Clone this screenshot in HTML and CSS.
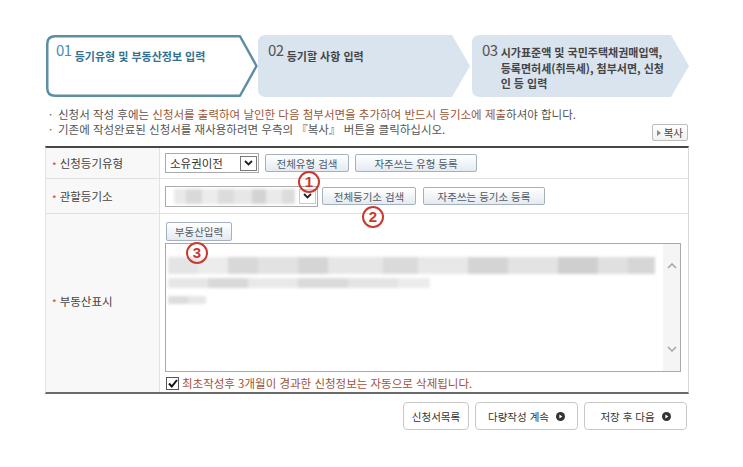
FILE: index.html
```html
<!DOCTYPE html>
<html lang="ko">
<head>
<meta charset="utf-8">
<title>등기신청</title>
<link rel="stylesheet" href="styles.css">
</head>
<body>
<div class="page">
  <div class="steps">
    <div class="step step-current">
      <svg class="step-shape" viewBox="0 0 212 62" preserveAspectRatio="none"><path d="M9 1.25H194L210.5 31L194 60.75H9Q1.25 60.75 1.25 53V9Q1.25 1.25 9 1.25Z" fill="#fff" stroke="#5d8ea2" stroke-width="2.5" stroke-linejoin="round"/></svg>
      <div class="step-text"><span class="step-num">01</span><span class="step-title">등기유형 및 부동산정보 입력</span></div>
    </div>
    <div class="step">
      <svg class="step-shape" viewBox="0 0 212 62" preserveAspectRatio="none"><path d="M8 0H194L212 31L194 62H8Q0 62 0 54V8Q0 0 8 0Z" fill="#dae4ee"/></svg>
      <div class="step-text"><span class="step-num">02</span><span class="step-title">등기할 사항 입력</span></div>
    </div>
    <div class="step step-last">
      <svg class="step-shape" viewBox="0 0 217 62" preserveAspectRatio="none"><path d="M8 0H199L217 31L199 62H8Q0 62 0 54V8Q0 0 8 0Z" fill="#dae4ee"/></svg>
      <div class="step-text"><span class="step-num">03</span><span class="step-title">시가표준액 및 국민주택채권매입액,<br>등록면허세(취득세), 첨부서면, 신청<br>인 등 입력</span></div>
    </div>
  </div>

  <div class="notes">
    <ul class="note-list">
      <li>신청서 작성 후에는 <span class="em">신청서를 출력하여 날인한 다음 첨부서면을 추가하여 반드시 등기소에 제출</span>하셔야 합니다.</li>
      <li>기존에 작성완료된 신청서를 재사용하려면 우측의 『복사』 버튼을 클릭하십시오.</li>
    </ul>
    <button class="copy-btn" type="button"><svg class="copy-arrow" width="4" height="6" viewBox="0 0 4 6"><path d="M0 0L4 3L0 6Z" fill="#8a8a8a"/></svg>복사</button>
  </div>

  <div class="form">
    <div class="row row-1">
      <div class="label"><span class="req">*</span>신청등기유형</div>
      <div class="field">
        <div class="select select-type"><span>소유권이전</span><span class="select-arrow"><svg width="9" height="6" viewBox="0 0 9 6"><path d="M1 1L4.5 4.5L8 1" fill="none" stroke="#222" stroke-width="1.8"/></svg></span></div>
        <button class="btn btn-type-search" type="button">전체유형 검색</button>
        <button class="btn btn-wide btn-gap-6" type="button">자주쓰는 유형 등록</button>
      </div>
    </div>
    <div class="row row-2">
      <div class="label"><span class="req">*</span>관할등기소</div>
      <div class="field">
        <div class="select select-office"><span class="blur blur-office"></span><span class="select-arrow select-arrow-soft"><svg width="9" height="6" viewBox="0 0 9 6"><path d="M1 1L4.5 4.5L8 1" fill="none" stroke="#222" stroke-width="1.8"/></svg></span></div>
        <button class="btn btn-office-search" type="button">전체등기소 검색</button>
        <button class="btn btn-wide btn-gap-7" type="button">자주쓰는 등기소 등록</button>
      </div>
    </div>
    <div class="row row-3">
      <div class="label label-tall"><span class="req">*</span>부동산표시</div>
      <div class="field field-col">
        <button class="btn btn-estate" type="button">부동산입력</button>
        <div class="textarea">
          <div class="ta-content">
            <div class="blur blur-line1"></div>
            <div class="blur blur-line2"></div>
            <div class="blur blur-line3"></div>
          </div>
          <div class="ta-scroll">
            <svg width="10" height="6" viewBox="0 0 10 6"><path d="M1 5L5 1L9 5" fill="none" stroke="#a8a8a8" stroke-width="1.6"/></svg>
            <svg width="10" height="6" viewBox="0 0 10 6"><path d="M1 1L5 5L9 1" fill="none" stroke="#a8a8a8" stroke-width="1.6"/></svg>
          </div>
        </div>
        <label class="check-row"><span class="check"><svg width="10" height="9" viewBox="0 0 10 9"><path d="M1 4.5L3.8 7.5L9 1" fill="none" stroke="#111" stroke-width="2"/></svg></span>최초작성후 3개월이 경과한 신청정보는 자동으로 삭제됩니다.</label>
      </div>
    </div>
    <span class="mark mark-1">1</span>
    <span class="mark mark-2">2</span>
    <span class="mark mark-3">3</span>
  </div>

  <div class="actions">
    <button class="act act-list" type="button">신청서목록</button>
    <button class="act act-next" type="button">다량작성 계속<svg width="9" height="9" viewBox="0 0 9 9"><circle cx="4.5" cy="4.5" r="4.5" fill="#333"/><path d="M3.4 2.4L6.4 4.5L3.4 6.6Z" fill="#fff"/></svg></button>
    <button class="act act-next" type="button">저장 후 다음<svg width="9" height="9" viewBox="0 0 9 9"><circle cx="4.5" cy="4.5" r="4.5" fill="#333"/><path d="M3.4 2.4L6.4 4.5L3.4 6.6Z" fill="#fff"/></svg></button>
  </div>
</div>
</body>
</html>
```

FILE: styles.css
```css
* { box-sizing: border-box; }

body {
  margin: 0;
  background: #fff;
  font-family: "Noto Sans CJK KR", "Noto Sans", sans-serif;
  color: #444;
}

.page {
  width: 689px;
  padding: 35px 0 0 45px;
}

/* ---------- steps ---------- */
.steps {
  display: flex;
  margin-left: 1px;
  height: 62px;
}

.step {
  position: relative;
  flex: none;
  width: 212px;
  height: 62px;
}

.step-last {
  width: 217px;
  margin-left: 2px;
}

.step-shape {
  position: absolute;
  left: 0;
  top: 0;
  width: 100%;
  height: 100%;
}

.step-text {
  position: relative;
  display: flex;
  align-items: flex-start;
  padding: 6px 0 0 10px;
}

.step-num {
  font-size: 15px;
  line-height: 18px;
  letter-spacing: -0.5px;
  color: #555;
  margin-right: 3px;
}

.step-title {
  font-size: 11px;
  font-weight: 700;
  line-height: 15.5px;
  margin-top: 8px;
  color: #454545;
  white-space: nowrap;
}

.step-current .step-num { color: #4b8db4; }
.step-current .step-title { color: #33718f; }
.step-last .step-title { margin-top: 4px; }

/* ---------- notes ---------- */
.notes {
  display: flex;
  justify-content: space-between;
  align-items: flex-end;
  margin-top: 10px;
}

.note-list {
  list-style: none;
  margin: 0;
  padding: 0;
  font-size: 11.5px;
  line-height: 15px;
  color: #555;
}

.note-list li {
  position: relative;
  padding-left: 13px;
  white-space: nowrap;
}

.note-list li::before {
  content: "·";
  position: absolute;
  left: 4px;
  color: #666;
}

.em { color: #9c5638; }

.copy-btn {
  display: flex;
  align-items: center;
  gap: 2px;
  height: 17px;
  margin: 0 1px -4px 0;
  padding: 0 4px 0 4px;
  border: 1px solid #bdbdbd;
  border-radius: 2px;
  background: linear-gradient(#ffffff, #f1f1f1);
  font-family: inherit;
  font-size: 10.5px;
  line-height: 15px;
  color: #444;
}

.copy-arrow { margin-right: 1px; }

/* ---------- form table ---------- */
.form {
  position: relative;
  margin-top: 9px;
  border-top: 2px solid #474747;
  border-bottom: 2px solid #6a6a6a;
  border-left: 1px solid #e2e2e2;
  border-right: 1px solid #d8d8d8;
}

.row {
  display: grid;
  grid-template-columns: 114px 1fr;
  border-bottom: 1px solid #e0e0e0;
}

.row-1 { height: 31px; }
.row-2 { height: 35px; }
.row-3 { height: 178px; border-bottom: 0; }

.label {
  display: flex;
  align-items: center;
  padding-left: 6px;
  background: #f8f8f8;
  border-right: 1px solid #e2e2e2;
  font-size: 11.5px;
  color: #444;
}

.label-tall { padding-bottom: 5px; }

.req {
  position: relative;
  top: 2px;
  margin-right: 3px;
  font-size: 10px;
  color: #d9443a;
}

.field {
  display: flex;
  align-items: center;
  padding-left: 5px;
}

.select {
  display: flex;
  align-items: center;
  justify-content: space-between;
  height: 20px;
  border: 1px solid #a9a9a9;
  background: #fff;
  font-size: 11.5px;
  color: #333;
  padding: 0 1px 0 4px;
}

.select-type { width: 94px; }
.select-office { width: 153px; height: 21px; padding-left: 8px; }

.select-arrow {
  display: flex;
  align-items: center;
  justify-content: center;
  width: 17px;
  height: 15px;
  border: 1px solid #7a7a7a;
  background: #fff;
}

.select-arrow-soft { border-color: #c9c9c9; }

.btn {
  display: inline-flex;
  align-items: center;
  justify-content: center;
  height: 18px;
  padding: 0;
  border: 1px solid #a3b1c0;
  border-radius: 2px;
  background: linear-gradient(#ffffff, #e4eaf1);
  font-family: inherit;
  font-size: 10.5px;
  color: #4d5b69;
}

.btn-type-search { width: 84px; margin-left: 6px; }
.btn-office-search { width: 94px; margin-left: 4px; }
.btn-wide { width: 122px; }
.btn-gap-6 { margin-left: 6px; }
.btn-gap-7 { margin-left: 7px; }
.btn-estate { width: 66px; height: 19px; margin-left: 1px; }

.field-col {
  flex-direction: column;
  align-items: flex-start;
  padding: 8px 7px 0 5px;
}

.textarea {
  display: flex;
  width: 100%;
  height: 129px;
  margin-top: 2px;
  border: 1px solid #a9a9a9;
  background: #fff;
}

.ta-content {
  flex: 1;
  padding: 13px 0 0 2px;
}

.ta-scroll {
  width: 17px;
  display: flex;
  flex-direction: column;
  align-items: center;
  justify-content: space-between;
  padding: 19px 0 19px;
  background: #f5f5f5;
}

.blur { display: block; filter: blur(1.8px); }

.blur-office {
  flex: 1;
  height: 15px;
  margin-right: 4px;
  background: linear-gradient(90deg, #e9e9e9 0 12px, #d9d9d9 12px 28px, #ececec 28px 44px, #dcdcdc 44px 60px, #e7e7e7 60px 78px, #d3d3d3 78px 92px, #eaeaea 92px 108px, #dcdcdc 108px 124px);
}

.blur-line1 {
  width: 487px;
  height: 17px;
  background: linear-gradient(90deg, #e4e4e4 0 30px, #ececec 30px 60px, #d8d8d8 60px 90px, #e2e2e2 90px 130px, #d5d5d5 130px 160px, #e6e6e6 160px 215px, #dadada 215px 250px, #e8e8e8 250px 300px, #d4d4d4 300px 340px, #e3e3e3 340px 390px, #cfcfcf 390px 430px, #e0e0e0 430px 460px, #d6d6d6 460px 487px);
}

.blur-line2 {
  width: 262px;
  height: 10px;
  margin-top: 4px;
  background: linear-gradient(90deg, #e6e6e6 0 40px, #d8d8d8 40px 80px, #e9e9e9 80px 130px, #dadada 130px 180px, #e4e4e4 180px 230px, #ececec 230px 262px);
}

.blur-line3 {
  width: 38px;
  height: 8px;
  margin-top: 8px;
  background: linear-gradient(90deg, #dcdcdc 0 20px, #e6e6e6 20px 38px);
}

.check-row {
  display: flex;
  align-items: center;
  gap: 3px;
  margin-top: 4px;
  margin-left: 1px;
  font-size: 11.5px;
  line-height: 14px;
  color: #a2503a;
}

.check {
  display: flex;
  align-items: center;
  justify-content: center;
  width: 13px;
  height: 13px;
  border: 1px solid #555;
  background: #fff;
}

.mark {
  position: absolute;
  width: 22px;
  height: 22px;
  border: 2.5px solid #c9392f;
  border-radius: 50%;
  color: #c9392f;
  font: 700 15px/17px "Liberation Sans", sans-serif;
  text-align: center;
}

.mark-1 { left: 252px; top: 23px; }
.mark-2 { left: 316px; top: 58px; }
.mark-3 { left: 140px; top: 94px; }

/* ---------- bottom actions ---------- */
.actions {
  display: flex;
  justify-content: flex-end;
  gap: 6px;
  margin: 8px 2px 0 0;
}

.act {
  display: flex;
  align-items: center;
  justify-content: center;
  gap: 7px;
  height: 28px;
  padding: 0;
  border: 1px solid #c8c8c8;
  border-radius: 4px;
  background: #fff;
  font-family: inherit;
  font-size: 10.5px;
  color: #333;
}

.act-list { width: 66px; }
.act-next { width: 103px; }
```
